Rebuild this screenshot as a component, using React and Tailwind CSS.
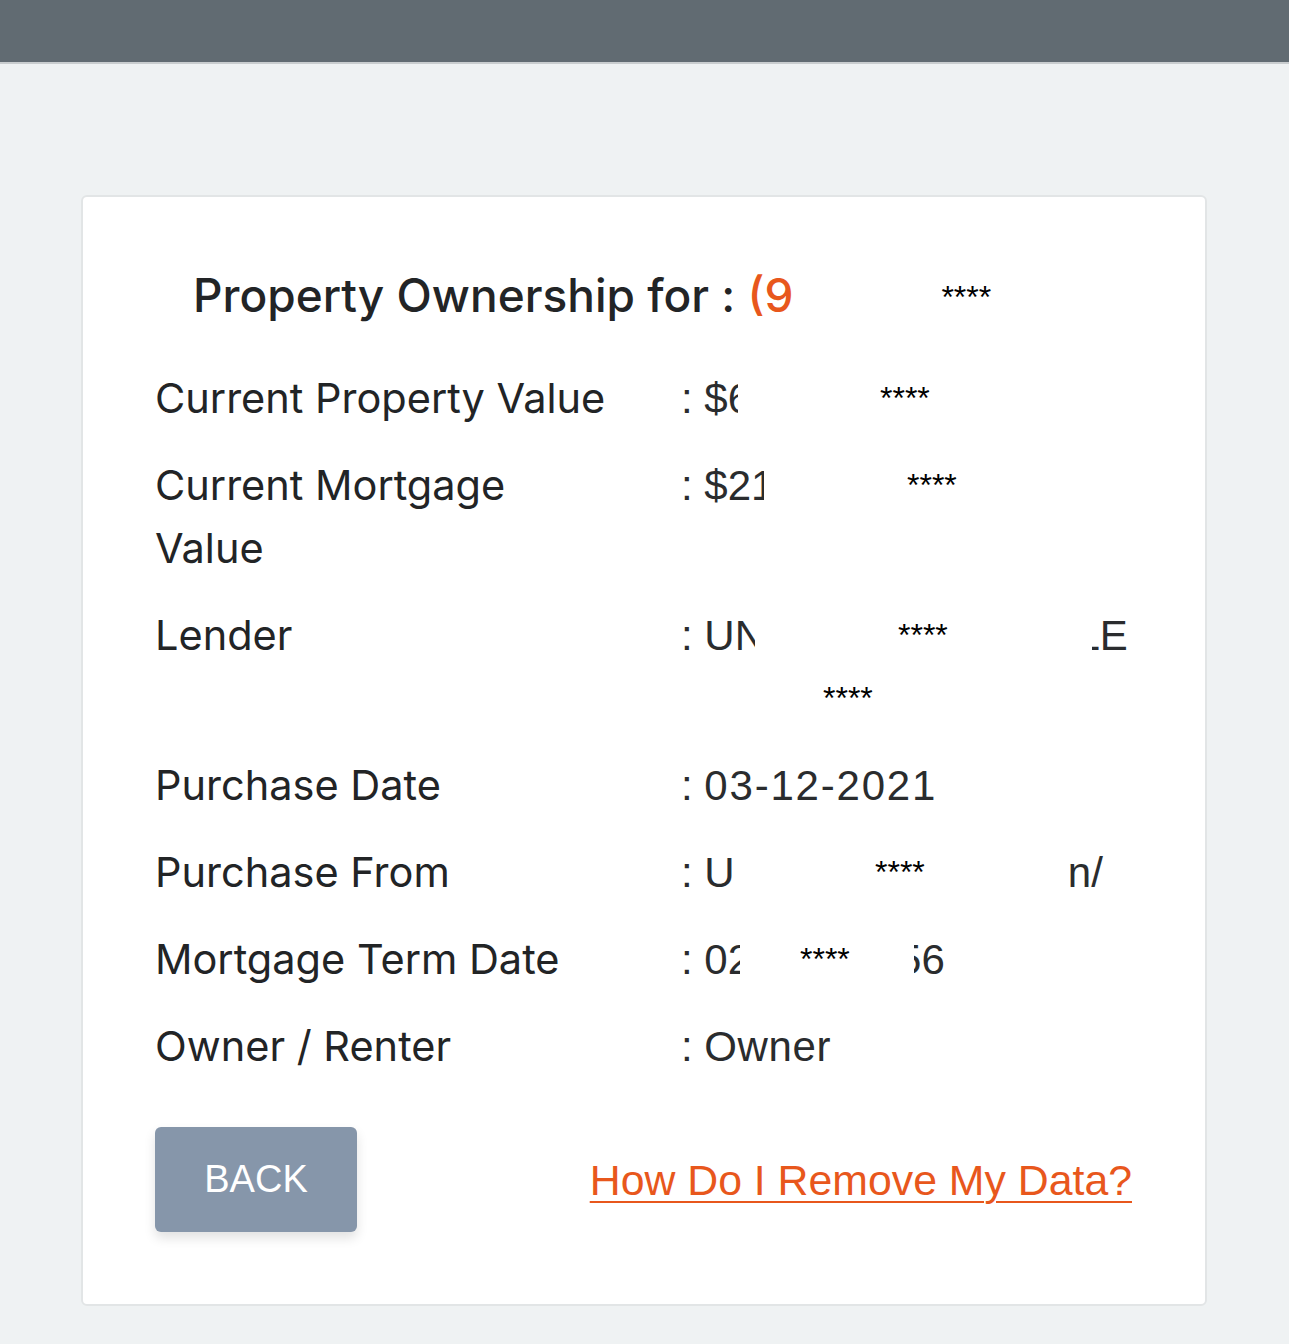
import React from 'react';

const rows = [
  { label: 'Current Property Value', value: 'v1' },
  { label: 'Current Mortgage Value', value: 'v2' },
  { label: 'Lender', value: 'lender' },
  { label: 'Purchase Date', value: 'date' },
  { label: 'Purchase From', value: 'from' },
  { label: 'Mortgage Term Date', value: 'term' },
  { label: 'Owner / Renter', value: 'owner' },
];

const Stars = ({ ml }) => (
  <span className={`${ml} font-['Liberation_Sans',Arial,sans-serif] text-[32px] leading-none text-black align-[4px]`}>
    ****
  </span>
);

// redacted values, rendered as the visible bits only
const renderValue = (key) => {
  switch (key) {
    case 'v1':
      return (
        <div>
          <span className="inline-block w-[57px] overflow-hidden whitespace-nowrap align-top">: $61</span>
          <Stars ml="ml-[142px]" />
        </div>
      );
    case 'v2':
      return (
        <div>
          <span className="inline-block w-[83px] overflow-hidden whitespace-nowrap align-top">: $21</span>
          <Stars ml="ml-[143px]" />
        </div>
      );
    case 'lender':
      return (
        <div>
          <div>
            <span className="inline-block w-[74px] overflow-hidden whitespace-nowrap align-top">: UN</span>
            <Stars ml="ml-[143px]" />
            <span className="inline-flex justify-end w-[36px] ml-[144px] overflow-hidden whitespace-nowrap align-top">LE</span>
          </div>
          <div>
            <Stars ml="ml-[142px]" />
          </div>
        </div>
      );
    case 'date':
      return (
        <div>
          : <span className="tracking-[1.8px]">03-12-2021</span>
        </div>
      );
    case 'from':
      return (
        <div>
          <span className="inline-block w-[52px] overflow-hidden whitespace-nowrap align-top">: U</span>
          <Stars ml="ml-[142px]" />
          <span className="inline-block ml-[143px] align-top">n/</span>
        </div>
      );
    case 'term':
      return (
        <div>
          <span className="inline-block w-[59px] overflow-hidden whitespace-nowrap align-top">: 02</span>
          <Stars ml="ml-[60px]" />
          <span className="inline-flex justify-end w-[31px] ml-[64px] overflow-hidden whitespace-nowrap align-top">56</span>
        </div>
      );
    default:
      return (
        <div>
          : <span className="tracking-[0.6px]">Owner</span>
        </div>
      );
  }
};

const App = () => {
  return (
    <div className="min-h-screen bg-[#eff2f3] pb-[39px]">
      <header className="h-[64px] bg-[#616b72] border-b-2 border-[#c9cdcf]" />

      <main className="pt-[131px]">
        <div className="w-[1126px] ml-[81px] bg-white border-2 border-[#e2e5e6] rounded-md pt-[70px] pb-[72px] pl-[72px] pr-[73px]">
          <h1 className="pl-[38px] font-['Inter',sans-serif] font-medium text-[46px] leading-[56px] text-[#222426] whitespace-nowrap">
            Property Ownership for : <span className="text-[#e8571c]">(9</span>
            <Stars ml="ml-[148px]" />
          </h1>

          <div className="mt-[44px]">
            {rows.map((row) => (
              <div key={row.label} className="flex mb-[24px] text-[42px] leading-[63px] text-[#222426]">
                <div className="w-[526px] pr-[62px] font-['Inter',sans-serif] text-[41.5px]">{row.label}</div>
                <div className="flex-1 font-['Liberation_Sans',Arial,sans-serif] text-[#2a2c2e]">
                  {renderValue(row.value)}
                </div>
              </div>
            ))}
          </div>

          <div className="pt-[25px] flex items-center justify-between">
            <button className="w-[202px] h-[105px] rounded-md bg-[#8696aa] text-white text-[38px] font-['Liberation_Sans',Arial,sans-serif] shadow-[0_6px_12px_rgba(0,0,0,0.12)]">
              BACK
            </button>
            <a
              href="#"
              className="font-['Liberation_Sans',Arial,sans-serif] text-[42.8px] leading-[50px] text-[#e8571c] underline decoration-2 underline-offset-[6px]"
            >
              How Do I Remove My Data?
            </a>
          </div>
        </div>
      </main>
    </div>
  );
};

export default App;
